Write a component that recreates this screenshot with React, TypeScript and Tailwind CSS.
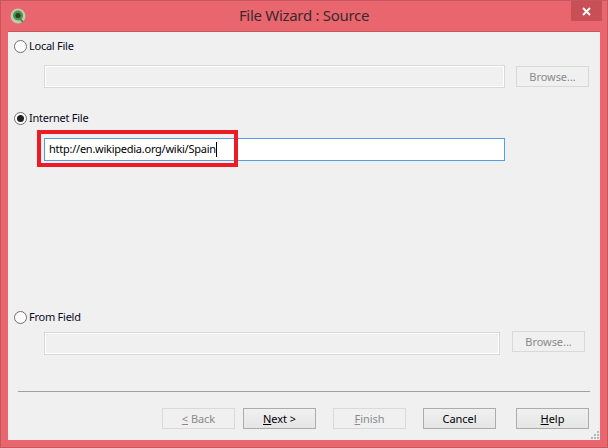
function Radio({ on = false }: { on?: boolean }) {
  return (
    <span className="flex h-[13px] w-[13px] shrink-0 items-center justify-center rounded-full border border-[#6f6f6f] bg-white">
      {on && <span className="h-[7px] w-[7px] rounded-full bg-[#222222]" />}
    </span>
  );
}

function RadioRow({ label, on = false }: { label: string; on?: boolean }) {
  return (
    <div className="ml-[6px] flex h-[16px] items-center gap-[2px] text-[#0a0a1e]">
      <Radio on={on} />
      <span>{label}</span>
    </div>
  );
}

function Field({ width }: { width: string }) {
  return <div className={`h-[23px] border border-[#d9d9d9] shadow-[inset_0_0_0_1px_#ffffff] ${width}`} />;
}

function Btn({ children, disabled = false, className = "" }: { children: React.ReactNode; disabled?: boolean; className?: string }) {
  return (
    <div
      className={`flex h-[21px] w-[73px] shrink-0 items-center justify-center border pt-[1px] tracking-[-0.05px] ${
        disabled
          ? "border-[#d9d9d9] text-[#8a8a8a]"
          : "border-[#acacac] bg-gradient-to-b from-[#f0f0f0] to-[#e5e5e5] text-black"
      } ${className}`}
    >
      <span>{children}</span>
    </div>
  );
}

function Grip() {
  const dots = [[6, 0], [3, 3], [6, 3], [0, 6], [3, 6], [6, 6]];
  return (
    <svg className="absolute bottom-[1px] right-[1px]" width="8" height="8" viewBox="0 0 8 8">
      {dots.map(([x, y]) => (
        <rect key={`${x}-${y}`} x={x} y={y} width="2" height="2" fill="#b8b8b8" />
      ))}
    </svg>
  );
}

function Logo() {
  return (
    <svg width="16" height="16" viewBox="0 0 16 16">
      <circle cx="8" cy="8" r="7.5" fill="#bfc9bd" />
      <circle cx="8" cy="7.5" r="5" fill="#4c9a3c" />
      <circle cx="8" cy="7.5" r="2.6" fill="#2f3a35" />
      <path d="M10 11l3 3" stroke="#3f9a35" strokeWidth="2" />
    </svg>
  );
}

export default function App() {
  return (
    <div
      className="flex h-[448px] w-[608px] flex-col overflow-hidden border border-[#c5575e] bg-[#e9666e] text-[11px] tracking-[-0.25px]"
      style={{ fontFamily: '"Noto Sans", sans-serif' }}
    >
      <div className="relative flex h-[30px] shrink-0 items-center justify-center pb-[2px] text-[#3b2a2c]">
        <div className="absolute left-[9px] top-[7px]">
          <Logo />
        </div>
        <span className="text-[15px] font-normal tracking-[-0.3px]">File Wizard : Source</span>
        <div className="absolute right-[5px] top-0 flex h-[20px] w-[31px] items-center justify-center bg-[#c74f55]">
          <svg width="9" height="9" viewBox="0 0 9 9">
            <path d="M1 1l7 7M8 1l-7 7" stroke="#ffffff" strokeWidth="2" />
          </svg>
        </div>
      </div>
      <div className="relative ml-[7px] flex h-[409px] w-[592px] flex-col border-t border-[#c5575e] bg-[#f0f0f0] pt-[6px]">
        <RadioRow label="Local File" />
        <div className="ml-[36px] mt-[11px] flex items-center gap-[11px]">
          <Field width="w-[461px]" />
          <Btn disabled>Browse...</Btn>
        </div>
        <div className="mt-[22px]">
          <RadioRow label="Internet File" on />
        </div>
        <div className="ml-[36px] mt-[12px] flex h-[23px] w-[461px] items-center border border-[#569de5] bg-white pl-[4px] text-black">
          <span>http://en.wikipedia.org/wiki/Spain</span>
          <span className="h-[15px] w-px bg-black" />
        </div>
        <div className="absolute left-[29px] top-[98px] h-[37px] w-[201px] border-[4px] border-[#ed1c24]" />
        <div className="mt-[148px]">
          <RadioRow label="From Field" />
        </div>
        <div className="ml-[36px] mt-[7px] flex items-start gap-[12px]">
          <Field width="w-[456px]" />
          <div className="-mt-[1px]">
            <Btn disabled>Browse...</Btn>
          </div>
        </div>
        <div className="ml-[10px] mt-[36px] h-px w-[572px] bg-[#a0a0a0]" />
        <div className="ml-[154px] mt-[16px] flex">
          <Btn disabled>
            <span className="underline">&lt;</span> Back
          </Btn>
          <Btn className="ml-[8px]">
            <span className="underline">N</span>ext &gt;
          </Btn>
          <Btn disabled className="ml-[17px]">
            <span className="underline">F</span>inish
          </Btn>
          <Btn className="ml-[17px]">Cancel</Btn>
          <Btn className="ml-[20px]">
            <span className="underline">H</span>elp
          </Btn>
        </div>
        <Grip />
      </div>
    </div>
  );
}
